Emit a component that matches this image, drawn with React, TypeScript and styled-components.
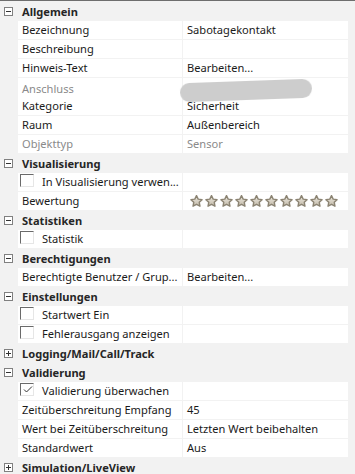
import styled, { createGlobalStyle } from 'styled-components';

const GlobalStyle = createGlobalStyle`
  html, body {
    margin: 0;
    padding: 0;
    background: #f2f2f2;
  }
  body {
    font-family: "Noto Sans", "Open Sans", sans-serif;
    font-size: 11.1px;
    color: #1a1a1a;
  }
`;

const Grid = styled.div`
  display: flex;
  flex-direction: column;
  width: 355px;
  height: 474px;
  overflow: hidden;
  border-top: 1px solid #6e6e6e;
  padding-top: 1px;
  box-sizing: border-box;
  background: #f2f2f2;
`;

const CategoryRow = styled.div`
  display: grid;
  grid-template-columns: 17px 1fr;
  align-items: center;
  height: 18px;
  flex: none;
  margin-bottom: 1px;
`;

const Expander = styled.span<{ $open: boolean }>`
  position: relative;
  width: 9px;
  height: 9px;
  margin-left: 4px;
  box-sizing: border-box;
  border: 1px solid #808080;
  background: #fff;

  &::before {
    content: '';
    position: absolute;
    left: 1px;
    right: 1px;
    top: 3px;
    height: 1px;
    background: #333;
  }

  &::after {
    content: '';
    display: ${(p) => (p.$open ? 'none' : 'block')};
    position: absolute;
    top: 1px;
    bottom: 1px;
    left: 3px;
    width: 1px;
    background: #333;
  }
`;

const CategoryLabel = styled.span`
  padding-left: 5px;
  font-weight: 700;
  color: #262626;
  white-space: nowrap;
`;

const PropRow = styled.div`
  display: grid;
  grid-template-columns: 17px 164px 165px;
  column-gap: 1px;
  height: 18px;
  flex: none;
  margin-bottom: 1px;
`;

const Cell = styled.div<{ $muted?: boolean }>`
  display: flex;
  align-items: center;
  background: #fff;
  padding-left: 4px;
  white-space: nowrap;
  overflow: visible;
  color: ${(p) => (p.$muted ? '#8a8a8a' : '#1a1a1a')};
  line-height: 18px;
`;

const CheckCell = styled(Cell)`
  padding-left: 2px;
  gap: 8px;
`;

const CheckBox = styled.span`
  position: relative;
  flex: none;
  width: 14px;
  height: 13px;
  margin-top: 1px;
  align-self: flex-start;
  box-sizing: border-box;
  border-top: 1px solid #6a6a6a;
  border-left: 1px solid #6a6a6a;
  border-right: 1px solid #e6e6e6;
  border-bottom: 1px solid #e6e6e6;
`;

const Blob = styled.span`
  display: block;
  flex: none;
  width: 132px;
  height: 19px;
  margin-left: -7px;
  margin-top: 3px;
  border-radius: 10px;
  background: #cdcdcd;
  transform: rotate(-2deg);
  filter: blur(0.6px);
`;

const Stars = styled.div`
  display: flex;
  gap: 2px;
  padding-left: 3px;
`;

function Star() {
  return (
    <svg width="13" height="12" viewBox="1 1.5 22 20.5" style={{ flex: 'none' }}>
      <defs>
        <linearGradient id="starfill" x1="0" y1="0" x2="0" y2="1">
          <stop offset="0" stopColor="#ece8df" />
          <stop offset="1" stopColor="#c4bcab" />
        </linearGradient>
      </defs>
      <path
        d="M12 2.5l2.9 6 6.6.9-4.8 4.6 1.2 6.6L12 17.4l-5.9 3.2 1.2-6.6L2.5 9.4l6.6-.9z"
        fill="url(#starfill)"
        stroke="#8b8372"
        strokeWidth="2.4"
        strokeLinejoin="round"
      />
    </svg>
  );
}

function Check() {
  return (
    <svg width="12" height="11" viewBox="0 0 12 11" style={{ position: 'absolute', left: 1, top: 0 }}>
      <path d="M2 5.5l2.5 2.5L10 2.5" fill="none" stroke="#333" strokeWidth="1" />
    </svg>
  );
}

type Item =
  | { kind: 'cat'; label: string; open?: boolean }
  | { kind: 'prop'; name: string; value?: string; muted?: boolean; blob?: boolean; stars?: boolean }
  | { kind: 'check'; label: string; checked?: boolean };

const items: Item[] = [
  { kind: 'cat', label: 'Allgemein', open: true },
  { kind: 'prop', name: 'Bezeichnung', value: 'Sabotagekontakt' },
  { kind: 'prop', name: 'Beschreibung' },
  { kind: 'prop', name: 'Hinweis-Text', value: 'Bearbeiten...' },
  { kind: 'prop', name: 'Anschluss', muted: true, blob: true },
  { kind: 'prop', name: 'Kategorie', value: 'Sicherheit' },
  { kind: 'prop', name: 'Raum', value: 'Außenbereich' },
  { kind: 'prop', name: 'Objekttyp', value: 'Sensor', muted: true },
  { kind: 'cat', label: 'Visualisierung', open: true },
  { kind: 'check', label: 'In Visualisierung verwen...' },
  { kind: 'prop', name: 'Bewertung', stars: true },
  { kind: 'cat', label: 'Statistiken', open: true },
  { kind: 'check', label: 'Statistik' },
  { kind: 'cat', label: 'Berechtigungen', open: true },
  { kind: 'prop', name: 'Berechtigte Benutzer / Grup...', value: 'Bearbeiten...' },
  { kind: 'cat', label: 'Einstellungen', open: true },
  { kind: 'check', label: 'Startwert Ein' },
  { kind: 'check', label: 'Fehlerausgang anzeigen' },
  { kind: 'cat', label: 'Logging/Mail/Call/Track', open: false },
  { kind: 'cat', label: 'Validierung', open: true },
  { kind: 'check', label: 'Validierung überwachen', checked: true },
  { kind: 'prop', name: 'Zeitüberschreitung Empfang', value: '45' },
  { kind: 'prop', name: 'Wert bei Zeitüberschreitung', value: 'Letzten Wert beibehalten' },
  { kind: 'prop', name: 'Standardwert', value: 'Aus' },
  { kind: 'cat', label: 'Simulation/LiveView', open: false },
];

export default function App() {
  return (
    <>
      <GlobalStyle />
      <Grid>
        {items.map((it, i) => {
          if (it.kind === 'cat') {
            return (
              <CategoryRow key={i}>
                <Expander $open={!!it.open} />
                <CategoryLabel>{it.label}</CategoryLabel>
              </CategoryRow>
            );
          }
          if (it.kind === 'check') {
            return (
              <PropRow key={i}>
                <span />
                <CheckCell>
                  <CheckBox>{it.checked && <Check />}</CheckBox>
                  <span>{it.label}</span>
                </CheckCell>
                <Cell />
              </PropRow>
            );
          }
          return (
            <PropRow key={i}>
              <span />
              <Cell $muted={it.muted}>{it.name}</Cell>
              <Cell $muted={it.muted}>
                {it.blob && <Blob />}
                {it.stars && (
                  <Stars>
                    {Array.from({ length: 10 }).map((_, s) => (
                      <Star key={s} />
                    ))}
                  </Stars>
                )}
                {it.value}
              </Cell>
            </PropRow>
          );
        })}
      </Grid>
    </>
  );
}
